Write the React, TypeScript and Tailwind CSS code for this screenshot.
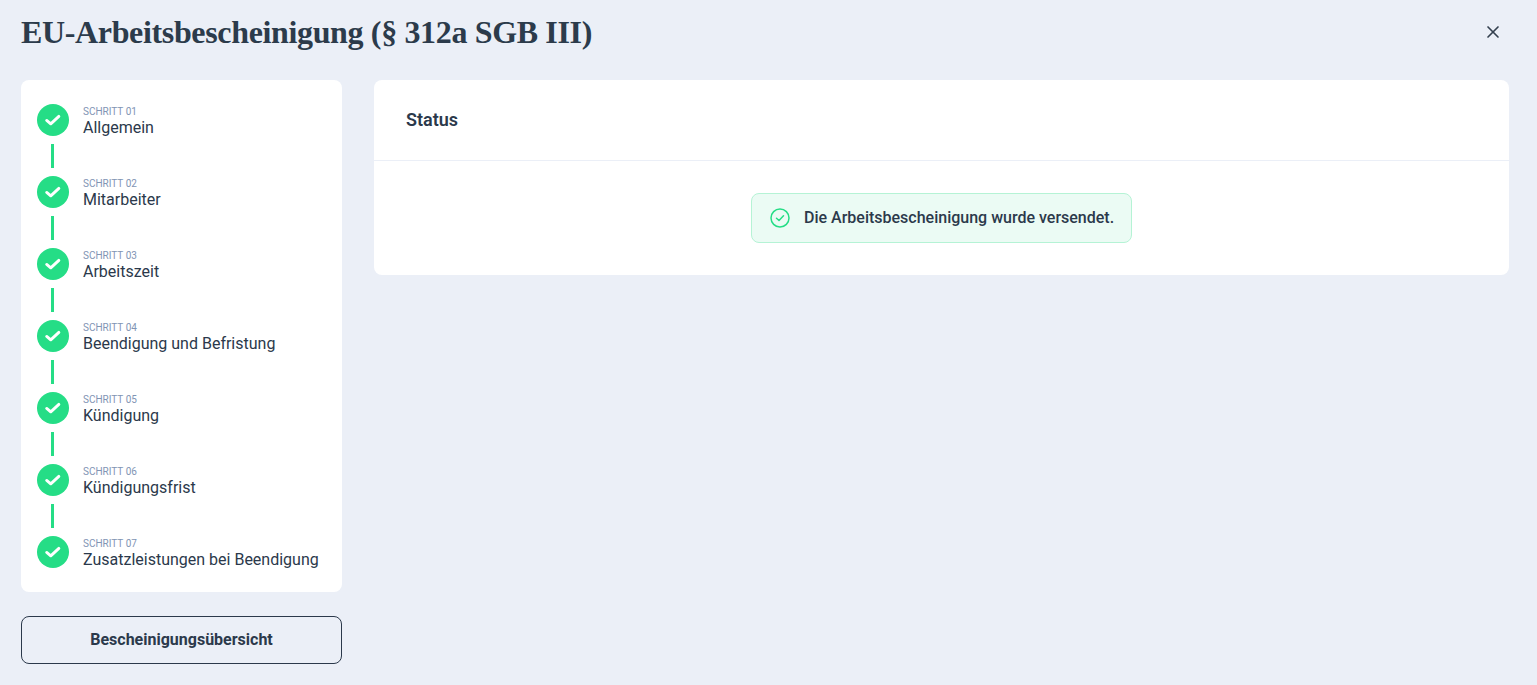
import { X } from 'lucide-react'

const steps = [
  'Allgemein',
  'Mitarbeiter',
  'Arbeitszeit',
  'Beendigung und Befristung',
  'Kündigung',
  'Kündigungsfrist',
  'Zusatzleistungen bei Beendigung',
]

function StepIcon() {
  return (
    <div className="flex h-8 w-8 shrink-0 items-center justify-center rounded-full bg-[#25dd86]">
      <svg width="18" height="18" viewBox="0 0 16 16" fill="none" stroke="#fff" strokeWidth="2.6" strokeLinecap="round" strokeLinejoin="round">
        <polyline points="2.4 8.4 6 11.4 13.2 4.8" />
      </svg>
    </div>
  )
}

export default function App() {
  return (
    <div className="min-h-[685px] bg-[#ebeff7] pl-[21px] pr-[28px] font-['Roboto',sans-serif] text-[#2b394b]">
      <div className="flex h-20 items-center justify-between pb-4">
        <h1 className="font-['Liberation_Serif',serif] text-[32px] font-bold leading-10 tracking-[-0.35px] text-[#2c3b4b]">
          EU-Arbeitsbescheinigung (§ 312a SGB III)
        </h1>
        <button className="mr-[6px] text-[#34404f]" aria-label="Close">
          <X size={20} strokeWidth={2} />
        </button>
      </div>

      <div className="flex items-start gap-8">
        <div className="w-[321px] shrink-0">
          <div className="rounded-lg bg-white px-4 py-6">
            {steps.map((step, i) => (
              <div key={step}>
                <div className="flex h-8 items-center gap-[14px]">
                  <StepIcon />
                  <div className="flex flex-col pt-1">
                    <span className="text-[10px] leading-[12px] text-[#8194b4]">
                      SCHRITT {String(i + 1).padStart(2, '0')}
                    </span>
                    <span className="text-base leading-5 text-[#2b394b]">{step}</span>
                  </div>
                </div>
                {i < steps.length - 1 && <div className="my-2 ml-[14px] h-6 w-[3px] bg-[#25dd86]" />}
              </div>
            ))}
          </div>
          <button className="mt-6 h-12 w-full rounded-lg border border-[#2b394b] text-base font-bold text-[#2b394b]">
            Bescheinigungsübersicht
          </button>
        </div>

        <div className="flex-1 rounded-lg bg-white">
          <div className="flex h-[81px] items-center border-b border-[#ebeff7] px-8">
            <h2 className="text-lg font-semibold text-[#2b394b]">Status</h2>
          </div>
          <div className="flex justify-center py-8">
            <div className="flex h-[50px] w-[381px] items-center gap-[14px] rounded-lg border border-[#b5f3d5] bg-[#ebfbf4] pl-[18px]">
              <svg width="20" height="20" viewBox="0 0 20 20" fill="none" stroke="#25dd86" strokeWidth="1.5" strokeLinecap="round" strokeLinejoin="round">
                <circle cx="10" cy="10" r="9" />
                <polyline points="6.5 10.2 9 12.5 13.5 7.8" />
              </svg>
              <span className="text-base font-medium text-[#2b394b]">Die Arbeitsbescheinigung wurde versendet.</span>
            </div>
          </div>
        </div>
      </div>
    </div>
  )
}
